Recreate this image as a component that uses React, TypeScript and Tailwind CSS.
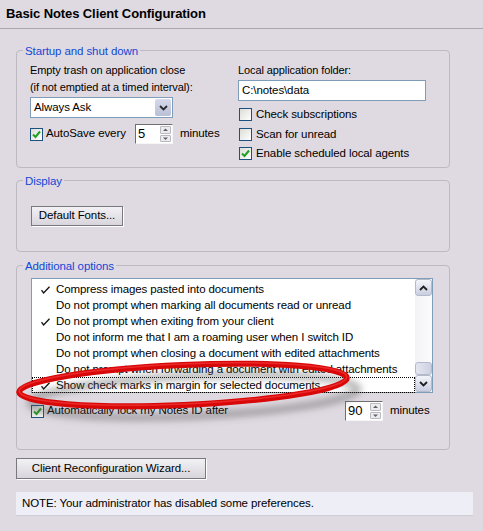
import React from 'react';

const FONT = { fontFamily: '"Liberation Sans", Arial, sans-serif', letterSpacing: '-0.1px' };

function Check({ on }: { on?: boolean }) {
  return (
    <span className="grid h-[13px] w-[13px] flex-none place-items-center border border-[#1c5180] bg-gradient-to-br from-[#dcdcd7] to-white">
      {on && (
        <svg width="9" height="9" viewBox="0 0 9 9">
          <path d="M1 4.5 L3.5 7 L8 1.5" fill="none" stroke="#21a121" strokeWidth="2" />
        </svg>
      )}
    </span>
  );
}

function Spin({ value }: { value: string }) {
  return (
    <div className="flex h-[20px] w-[38px] flex-none items-stretch border border-t-[#6f6f6f] border-l-[#6f6f6f] border-b-[#f6f6f6] border-r-[#f6f6f6] bg-white">
      <span className="flex-1 pl-[2px] text-[13px] leading-[18px]">{value}</span>
      <div className="flex w-[12px] flex-col gap-[1px] py-[1px] pr-[1px]">
        {['M1 4 L3.5 1.5 L6 4', 'M1 1.5 L3.5 4 L6 1.5'].map((d, i) => (
          <span key={i} className="grid flex-1 place-items-center rounded-[1px] border border-[#b9b9c0] bg-[#ecebef]">
            <svg width="7" height="5" viewBox="0 0 7 5">
              <path d={d} fill="#606060" />
            </svg>
          </span>
        ))}
      </div>
    </div>
  );
}

function Group({ title, className, children }: { title: string; className: string; children: React.ReactNode }) {
  return (
    <div className={`relative ml-[16px] w-[434px] rounded-[4px] border border-[#bdb9c0] ${className}`}>
      <span className="absolute -top-[7px] left-[6px] bg-[#dfdae1] px-[2px] text-[11.5px] leading-[14px] text-[#1148d6]">{title}</span>
      {children}
    </div>
  );
}

function ScrollBtn({ up }: { up?: boolean }) {
  return (
    <span className="grid h-[17px] w-[17px] place-items-center rounded-[3px] border border-[#b4b9cc] bg-gradient-to-b from-[#f4f5fa] to-[#c9cee0]">
      <svg width="9" height="6" viewBox="0 0 9 6">
        <path d={up ? 'M1 5 L4.5 1.5 L8 5' : 'M1 1 L4.5 4.5 L8 1'} fill="none" stroke="#202020" strokeWidth="1.8" />
      </svg>
    </span>
  );
}

function Tick() {
  return (
    <svg width="9" height="8" viewBox="0 0 9 8" className="mt-[1px]">
      <path d="M0.5 4.2 L2.6 7 L8.5 0.8" fill="none" stroke="#101010" strokeWidth="1.3" />
    </svg>
  );
}

const OPTIONS: [boolean, string][] = [
  [true, 'Compress images pasted into documents'],
  [false, 'Do not prompt when marking all documents read or unread'],
  [true, 'Do not prompt when exiting from your client'],
  [false, 'Do not inform me that I am a roaming user when I switch ID'],
  [false, 'Do not prompt when closing a document with edited attachments'],
  [false, 'Do not prompt when forwarding a document with edited attachments'],
  [true, 'Show check marks in margin for selected documents'],
];

export default function App() {
  return (
    <div className="relative flex h-[531px] w-[483px] flex-col overflow-hidden bg-[#dfdae1] text-[11px] text-black" style={FONT}>
      <div className="h-[29px] border-b border-[#aaa6ad] pl-[6px] pt-[6px] text-[13px] font-bold leading-[16px]">
        Basic Notes Client Configuration
      </div>

      <Group title="Startup and shut down" className="mt-[21px] h-[118px]">
        <div className="flex pl-[13px] pt-[11px]">
          <div className="w-[208px]">
            <div className="leading-[17px]">Empty trash on application close</div>
            <div className="leading-[17px]">(if not emptied at a timed interval):</div>
            <div className="mt-[1px] flex h-[21px] w-[143px] items-stretch border border-[#7f9db9] bg-white">
              <span className="flex-1 pl-[3px] text-[11.5px] leading-[19px]">Always Ask</span>
              <span className="m-[1px] grid w-[16px] place-items-center rounded-[2px] bg-gradient-to-b from-[#d6daea] to-[#b9bfd6]">
                <svg width="9" height="6" viewBox="0 0 9 6">
                  <path d="M1 1 L4.5 4.5 L8 1" fill="none" stroke="#2a2a2a" strokeWidth="1.8" />
                </svg>
              </span>
            </div>
            <div className="mt-[6px] flex items-center">
              <Check on />
              <span className="ml-[3px] w-[89px] whitespace-nowrap text-[11.5px]">AutoSave every</span>
              <Spin value="5" />
              <span className="ml-[7px] text-[11.5px]">minutes</span>
            </div>
          </div>
          <div>
            <div className="leading-[17px]">Local application folder:</div>
            <div className="mt-[1px] h-[21px] w-[188px] border border-[#7f9db9] bg-white pl-[3px] text-[11.5px] leading-[19px]">C:\notes\data</div>
            <div className="mt-[4px] flex flex-col">
              {([[false, 'Check subscriptions'], [false, 'Scan for unread'], [true, 'Enable scheduled local agents']] as const).map(([on, t], i) => (
                <div key={i} className="flex h-[19.5px] items-center pl-[1px]">
                  <Check on={on} />
                  <span className="ml-[4px] text-[11.5px]">{t}</span>
                </div>
              ))}
            </div>
          </div>
        </div>
      </Group>

      <Group title="Display" className="mt-[12px] h-[72px]">
        <div className="pl-[14px] pt-[25px]">
          <button className="h-[20px] w-[92px] border border-[#7a787e] bg-gradient-to-b from-[#f2f1f4] to-[#d8d6dc] text-[11.5px] shadow-[1px_1px_0_#fff]">
            Default Fonts...
          </button>
        </div>
      </Group>

      <Group title="Additional options" className="mt-[13px] h-[185px]">
        <div className="pl-[14px] pt-[12px]">
          <div className="flex h-[115px] w-[402px] border border-[#7f9db9] bg-white">
            <div className="flex-1 pt-[2px]">
              {OPTIONS.map(([on, t], i) => (
                <div
                  key={i}
                  className={`flex h-[16px] items-center whitespace-nowrap ${i === 6 ? 'border border-dotted border-black' : 'border border-transparent'}`}
                >
                  <span className="grid w-[22px] place-items-center pl-[2px]">{on && <Tick />}</span>
                  <span className="ml-[1px] text-[11.5px] leading-[14px]">{t}</span>
                </div>
              ))}
            </div>
            <div className="flex w-[17px] flex-col bg-gradient-to-r from-[#f3f3f6] to-[#fbfbfd]">
              <ScrollBtn up />
              <div className="flex-1" />
              <span className="h-[13px] w-[17px] rounded-[3px] border border-[#b4b9cc] bg-gradient-to-r from-[#e4e6f0] to-[#cdd1e2]" />
              <ScrollBtn />
            </div>
          </div>
          <div className="mt-[8px] flex items-center">
            <Check on />
            <span className="ml-[3px] w-[298px] whitespace-nowrap text-[11.5px]">Automatically lock my Notes ID after</span>
            <Spin value="90" />
            <span className="ml-[7px] text-[11.5px]">minutes</span>
          </div>
        </div>
      </Group>

      <button className="ml-[16px] mt-[8px] h-[21px] w-[190px] border border-[#7a787e] bg-gradient-to-b from-[#f2f1f4] to-[#d8d6dc] text-[11.5px] shadow-[1px_1px_0_#fff]">
        Client Reconfiguration Wizard...
      </button>

      <div className="ml-[16px] mt-[13px] h-[23px] w-[457px] bg-[#eeeef6] pl-[6px] text-[11.5px] leading-[22px] shadow-[0_1px_0_#d0ccd6]">
        NOTE: Your administrator has disabled some preferences.
      </div>

      {/* red annotation ring */}
      <svg className="pointer-events-none absolute left-0 top-0" width="483" height="531">
        <defs>
          <filter id="blur" x="-20%" y="-50%" width="140%" height="200%">
            <feGaussianBlur stdDeviation="3.5" />
          </filter>
        </defs>
        <ellipse cx="194" cy="396" rx="164" ry="20" fill="none" stroke="#505050" strokeOpacity="0.45" strokeWidth="7" filter="url(#blur)" transform="rotate(-2.5 194 396)" />
        <ellipse cx="183" cy="385" rx="164" ry="20" fill="none" stroke="#d80808" strokeWidth="6" transform="rotate(-2.5 183 385)" />
        <ellipse cx="183" cy="384" rx="164" ry="20" fill="none" stroke="#ff4a4a" strokeOpacity="0.5" strokeWidth="1.5" transform="rotate(-2.5 183 384)" />
      </svg>
    </div>
  );
}
